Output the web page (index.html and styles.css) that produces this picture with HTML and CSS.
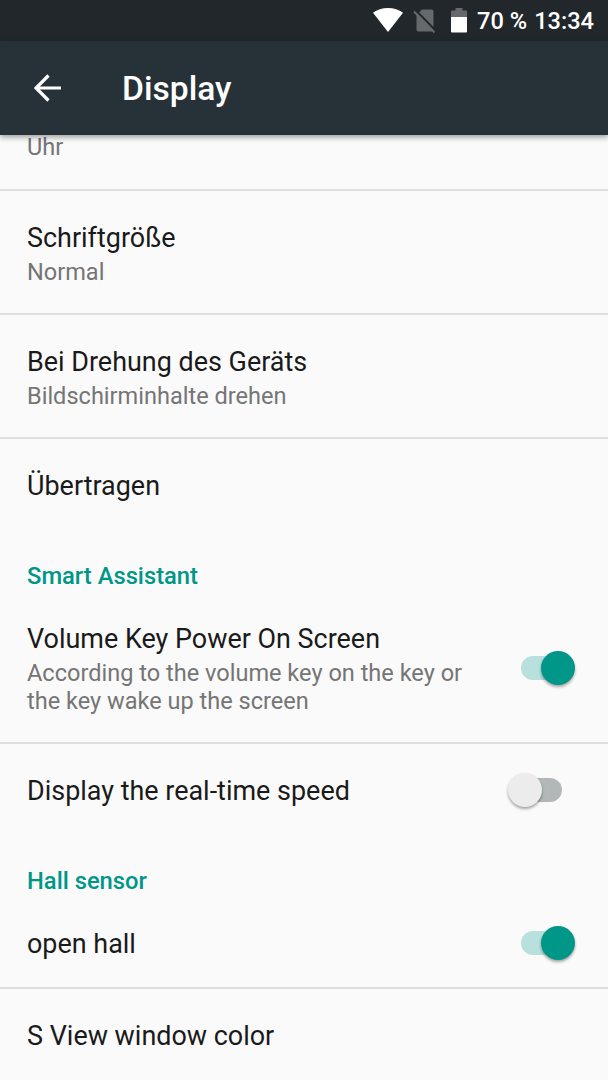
FILE: index.html
```html
<!DOCTYPE html>
<html lang="de">

<head>
  <meta charset="UTF-8">
  <meta name="viewport" content="width=device-width, initial-scale=1.0">
  <title>Display</title>
  <link rel="stylesheet" href="styles.css">
</head>

<body>
  <div class="status-bar">
    <svg class="wifi" width="30" height="24" viewBox="0 0 30 24">
      <path d="M0 4.700C4 1.600 9.200 0 15 0s11 1.600 15 4.700L15 24z" fill="#fff"/>
    </svg>
    <svg class="no-sim" width="23" height="24" viewBox="0 0 23 24">
      <path d="M9 .5H18.500a2 2 0 0 1 2 2V20.500a2 2 0 0 1-2 2H5.500a2 2 0 0 1-2-2V6z" fill="#66696b"/>
      <path d="M3 1.500L23 22" stroke="#21272b" stroke-width="2"/>
      <path d="M1 2.500L21.500 23.500" stroke="#66696b" stroke-width="2"/>
    </svg>
    <svg class="battery" width="16" height="25" viewBox="0 0 16 25">
      <path d="M4.500 0h7v2.500H15q1 0 1 1V9H0V3.500q0-1 1-1h3.500z" fill="#66696b"/>
      <path d="M0 9h16v14.500q0 1-1 1H1q-1 0-1-1z" fill="#fff"/>
    </svg>
    <span class="percent">70 %</span>
    <span class="clock">13:34</span>
  </div>

  <header class="toolbar">
    <svg class="back" width="28" height="28" viewBox="0 0 28 28">
      <path d="M27 14H2.500M14.500 1.500L2 14l12.500 12.500" fill="none" stroke="#fff" stroke-width="3.200"/>
    </svg>
    <h1>Display</h1>
  </header>

  <main class="settings">
    <div class="row scrolled">
      <p class="summary">Uhr</p>
    </div>
    <div class="row">
      <div class="text">
        <h2>Schriftgröße</h2>
        <p class="summary">Normal</p>
      </div>
    </div>
    <div class="row">
      <div class="text">
        <h2>Bei Drehung des Geräts</h2>
        <p class="summary">Bildschirminhalte drehen</p>
      </div>
    </div>
    <div class="row last">
      <h2>Übertragen</h2>
    </div>

    <h3>Smart Assistant</h3>
    <div class="row">
      <div class="text">
        <h2>Volume Key Power On Screen</h2>
        <p class="summary">According to the volume key on the key or<br>the key wake up the screen</p>
      </div>
      <div class="switch on"><span class="thumb"></span></div>
    </div>
    <div class="row last">
      <h2>Display the real-time speed</h2>
      <div class="switch"><span class="thumb"></span></div>
    </div>

    <h3>Hall sensor</h3>
    <div class="row">
      <h2>open hall</h2>
      <div class="switch on"><span class="thumb"></span></div>
    </div>
    <div class="row last">
      <h2>S View window color</h2>
    </div>
  </main>
</body>

</html>
```
FILE: styles.css
```css
* {
  box-sizing: border-box;
}

body {
  display: flex;
  flex-direction: column;
  height: 1080px;
  margin: 0;
  overflow: hidden;
  font-family: Roboto, sans-serif;
  background-color: #fafafa;
  color: #1a1a1a;
}

h1,
h2,
h3,
p {
  margin: 0;
}

.status-bar {
  display: flex;
  flex-shrink: 0;
  align-items: center;
  justify-content: flex-end;
  height: 41px;
  padding-right: 14px;
  background-color: #21272b;
  color: #fff;
  font-size: 23.6px;
  font-weight: 500;
  white-space: nowrap;
}

.wifi {
  margin-bottom: 1px;
}

.no-sim {
  margin-left: 10px;
}

.battery {
  margin-left: 15px;
}

.percent {
  margin-left: 10px;
}

.clock {
  margin-left: 7px;
}

.toolbar {
  display: flex;
  flex-shrink: 0;
  align-items: center;
  position: relative;
  z-index: 1;
  height: 94px;
  padding-left: 34px;
  background-color: #263238;
  box-shadow: 0 2px 6px rgba(0, 0, 0, 0.4);
}

.toolbar h1 {
  margin-left: 60px;
  color: #fff;
  font-size: 33.6px;
  font-weight: 500;
}

.settings {
  flex: 1;
}

.row {
  display: flex;
  align-items: center;
  justify-content: space-between;
  padding: 31px 33px 27px 27px;
  border-bottom: 2px solid #dedede;
}

.row.last {
  border-bottom: none;
}

h2 {
  font-size: 26.95px;
  font-weight: 400;
  line-height: 32px;
}

.summary {
  color: #757575;
  font-size: 23.55px;
  line-height: 28px;
}

.text .summary {
  margin-top: 4px;
}

/* first row is partly scrolled under the toolbar */
.row.scrolled {
  padding-top: 0;
  padding-bottom: 30px;
}

.row.scrolled .summary {
  line-height: 24px;
}

h3 {
  padding: 33px 27px 2px;
  color: #009688;
  font-size: 23.75px;
  font-weight: 500;
  line-height: 28px;
}

.switch {
  display: flex;
  flex-shrink: 0;
  align-items: center;
  width: 41px;
  height: 24px;
  margin: 0 13px 3px 0;
  border-radius: 12px;
  background-color: #b2b8b8;
}

.thumb {
  flex-shrink: 0;
  width: 34px;
  height: 34px;
  margin-left: -13px;
  border-radius: 50%;
  background-color: #ececec;
  box-shadow: 0 2px 3px rgba(0, 0, 0, 0.35);
}

.switch.on {
  background-color: #b8e0dc;
}

.switch.on .thumb {
  margin-left: 20px;
  background-color: #009688;
}
```
